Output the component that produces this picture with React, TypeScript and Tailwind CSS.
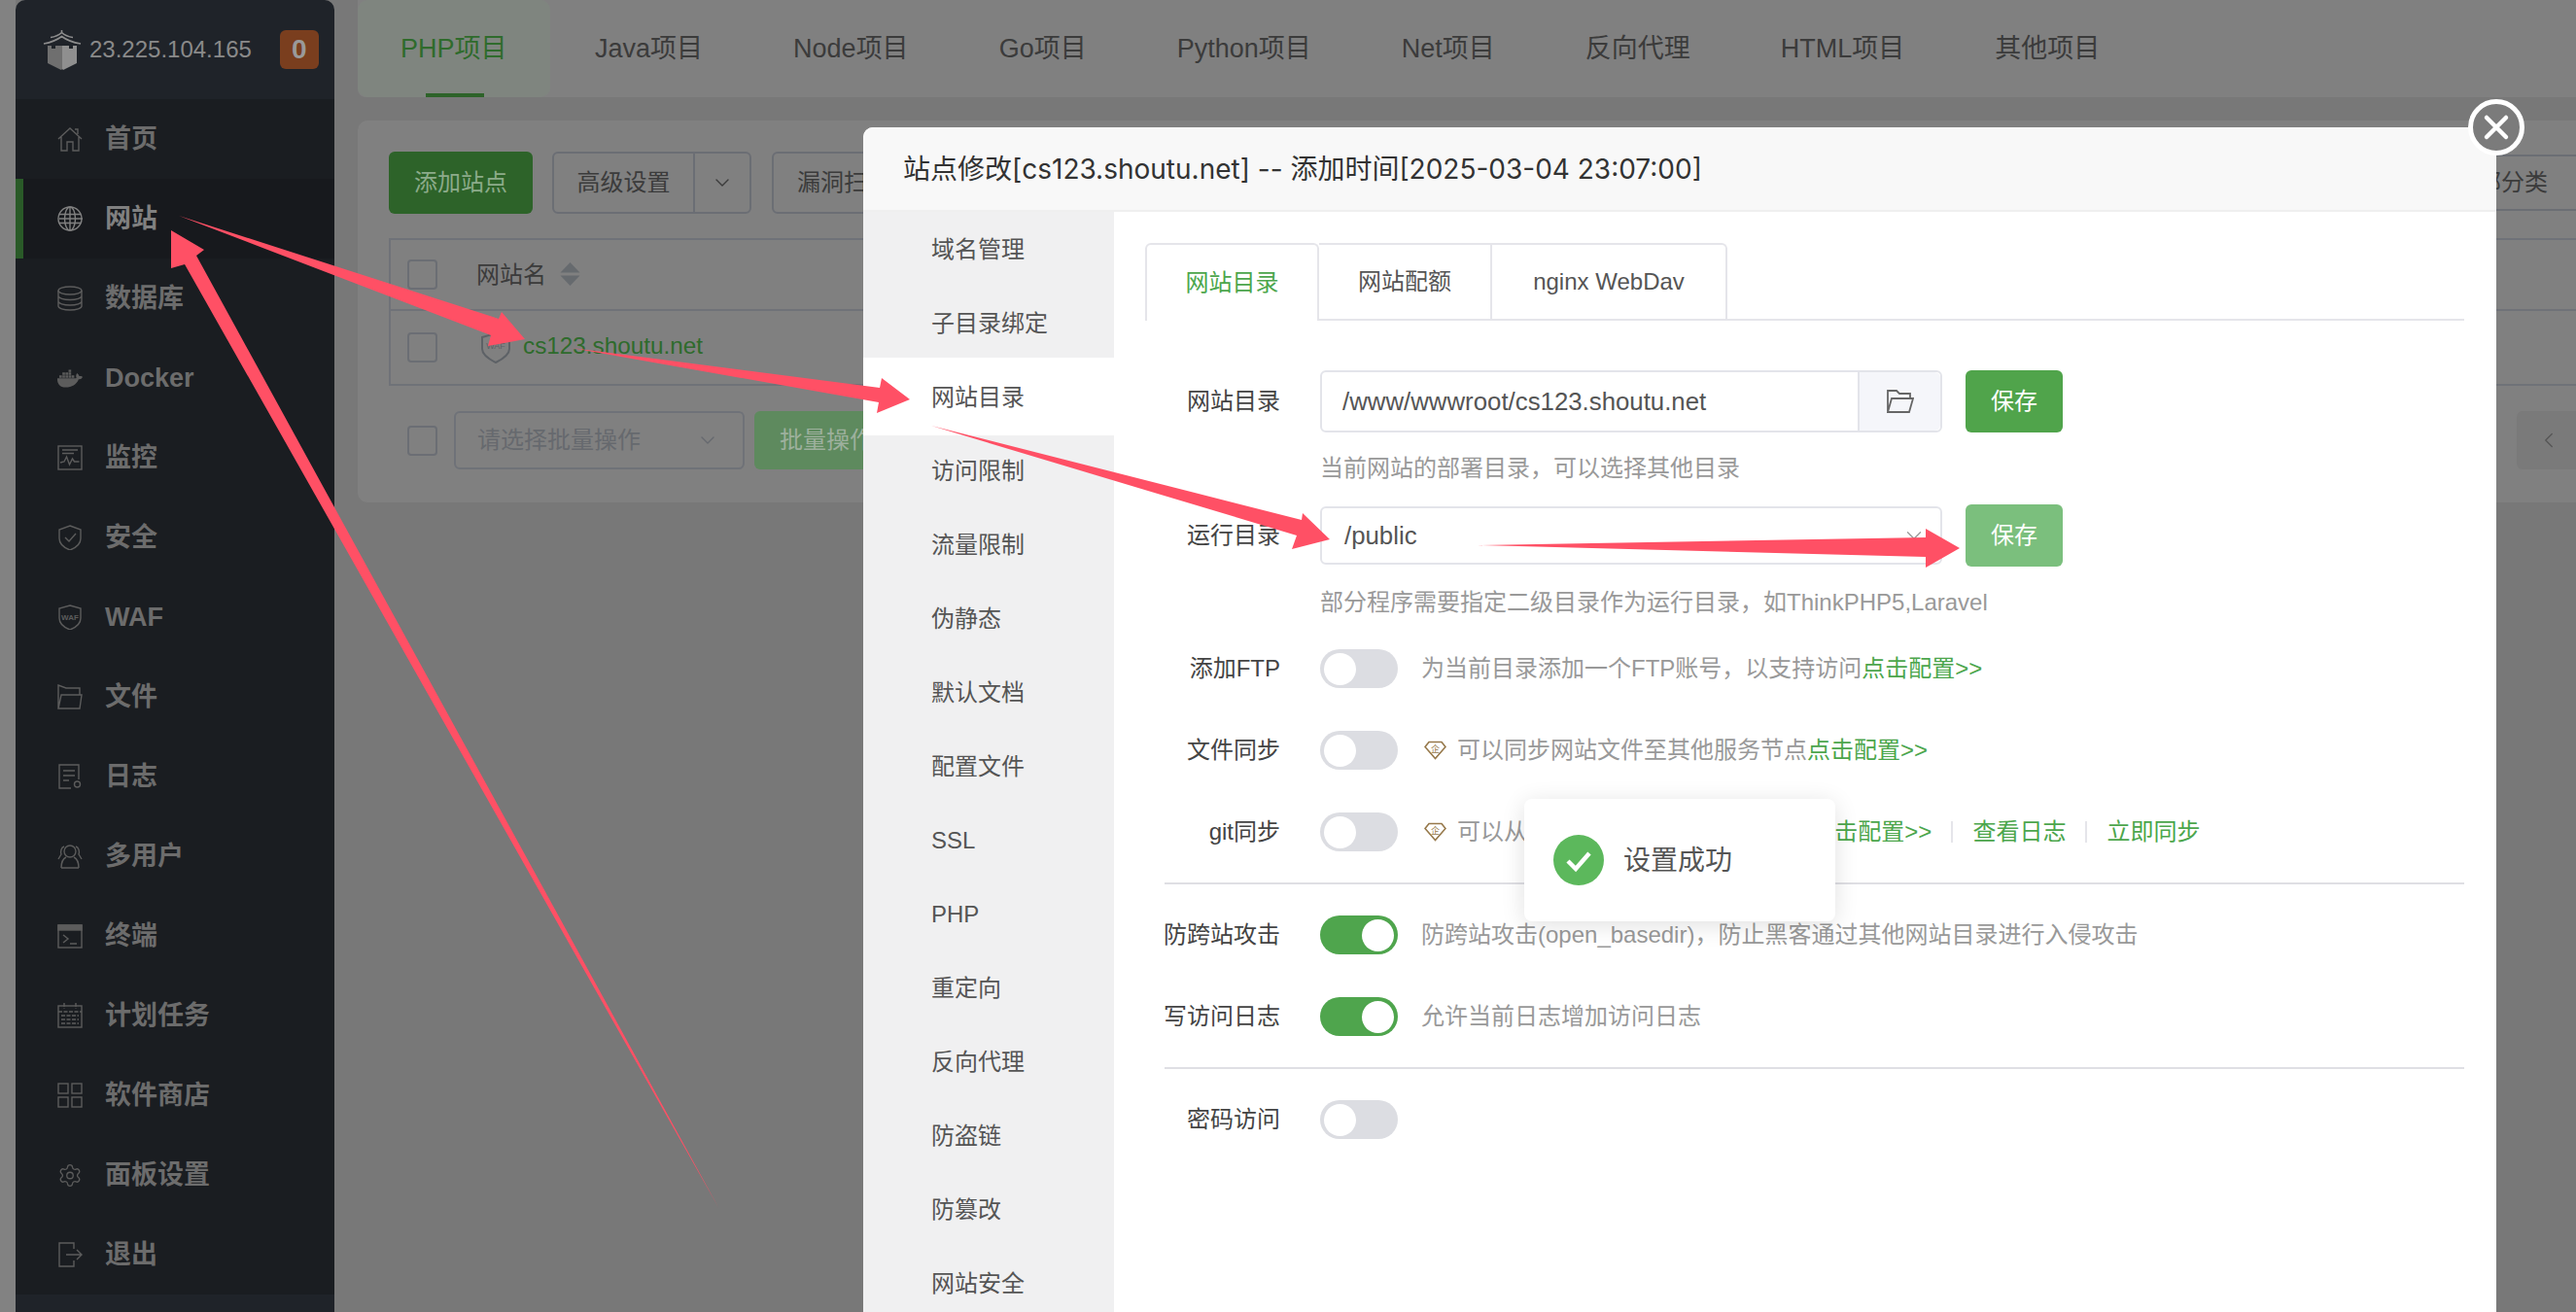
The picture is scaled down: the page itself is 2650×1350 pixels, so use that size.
import { ChevronDown, ChevronLeft, Settings } from "lucide-react";
import { FaDocker } from "react-icons/fa";
import type { ReactNode } from "react";

function Ico({ children }: { children: ReactNode }) {
  return (
    <svg width="26" height="26" viewBox="0 0 26 26" fill="none" stroke="currentColor" strokeWidth="1.4">
      {children}
    </svg>
  );
}

const sideItems: { label: string; icon: ReactNode; active?: boolean }[] = [
  {
    label: "首页",
    icon: (
      <Ico>
        <path d="M1 13 13 2l12 11M18 3h3v5M4 11v14h6v-9h6v9h6V11" />
      </Ico>
    ),
  },
  {
    label: "网站",
    active: true,
    icon: (
      <Ico>
        <circle cx="13" cy="13" r="12" />
        <ellipse cx="13" cy="13" rx="5.5" ry="12" />
        <path d="M2 8.5h22M2 13h24M2 17.5h22M13 1v24" />
      </Ico>
    ),
  },
  {
    label: "数据库",
    icon: (
      <Ico>
        <ellipse cx="13" cy="5" rx="12" ry="4" />
        <path d="M1 5v16c0 2.2 5.4 4 12 4s12-1.800 12-4V5M1 10.500c0 2.200 5.400 4 12 4s12-1.800 12-4M1 16c0 2.200 5.400 4 12 4s12-1.800 12-4" />
      </Ico>
    ),
  },
  { label: "Docker", icon: <FaDocker size={27} /> },
  {
    label: "监控",
    icon: (
      <Ico>
        <rect x="1" y="1" width="24" height="24" />
        <path d="M5 5h16M5 8.500h12M3 18l4-1 2.500-5 3 8 3-6 2 3 5 0" />
      </Ico>
    ),
  },
  {
    label: "安全",
    icon: (
      <Ico>
        <path d="M13 1 24 5v9c0 6-6 10-11 12C8 24 2 20 2 14V5Z" />
        <path d="m8 13 4 4 7-8" />
      </Ico>
    ),
  },
  {
    label: "WAF",
    icon: (
      <Ico>
        <path d="M13 1 24 4v10c0 6-6 10-11 12C8 24 2 20 2 14V4Z" />
        <text x="13" y="16" fontSize="8" textAnchor="middle" fill="currentColor" stroke="none">
          WAF
        </text>
      </Ico>
    ),
  },
  {
    label: "文件",
    icon: (
      <Ico>
        <path d="M1 25V1l8 3h14v7M1 25h22l2-14H4L1 25Z" />
      </Ico>
    ),
  },
  {
    label: "日志",
    icon: (
      <Ico>
        <path d="M14 25H2V1h20v15M6 7h12M6 12h12M6 17h6" />
        <circle cx="20.500" cy="21" r="3" />
      </Ico>
    ),
  },
  {
    label: "多用户",
    icon: (
      <Ico>
        <circle cx="13" cy="8" r="6" />
        <path d="M4 25c0-7 3-10 5-11M22 25c0-7-3-10-5-11M4 25h18M7 3c-3 1-4 5-3 8l-3 5M19 3c3 1 4 5 3 8l3 5" />
      </Ico>
    ),
  },
  {
    label: "终端",
    icon: (
      <Ico>
        <rect x="1" y="2" width="24" height="23" />
        <rect x="1" y="2" width="24" height="5" fill="currentColor" />
        <path d="m6 12 5 4-5 4M13 21h7" />
      </Ico>
    ),
  },
  {
    label: "计划任务",
    icon: (
      <Ico>
        <rect x="1" y="3" width="24" height="22" />
        <path d="M7 0v6M19 0v6M1 9h24M4 13h18M4 17h18M4 21h18" strokeDasharray="4 1.500" />
      </Ico>
    ),
  },
  {
    label: "软件商店",
    icon: (
      <Ico>
        <rect x="1" y="1" width="10" height="10" />
        <rect x="15" y="1" width="10" height="10" />
        <rect x="1" y="15" width="10" height="10" />
        <rect x="15" y="15" width="10" height="10" />
      </Ico>
    ),
  },
  { label: "面板设置", icon: <Settings size={27} strokeWidth={1.2} /> },
  {
    label: "退出",
    icon: (
      <Ico>
        <path d="M17 7V1H2v24h15v-6M9 13h16M20 8l5 5-5 5" />
      </Ico>
    ),
  },
];

const projectTabs = ["PHP项目", "Java项目", "Node项目", "Go项目", "Python项目", "Net项目", "反向代理", "HTML项目", "其他项目"];

const siteMenu = [
  "域名管理",
  "子目录绑定",
  "网站目录",
  "访问限制",
  "流量限制",
  "伪静态",
  "默认文档",
  "配置文件",
  "SSL",
  "PHP",
  "重定向",
  "反向代理",
  "防盗链",
  "防篡改",
  "网站安全",
];

function Toggle({ on }: { on?: boolean }) {
  return (
    <div
      className={`flex h-[40px] w-[80px] shrink-0 items-center rounded-full px-[4px] ${
        on ? "justify-end bg-[#4fa54d]" : "justify-start bg-[#dcdde2]"
      }`}
    >
      <div className="h-[33px] w-[33px] rounded-full bg-white" />
    </div>
  );
}

function Diamond() {
  return (
    <svg width="23" height="20" viewBox="0 0 23 20" fill="none" stroke="#96784a" strokeWidth="1.6" className="mr-[11px] ml-[3px] shrink-0">
      <path d="M5 1.500h13l4 5-10.500 12L1 6.500Z" />
      <text x="11.500" y="11.500" fontSize="9" textAnchor="middle" fill="#96784a" stroke="none">
        企
      </text>
    </svg>
  );
}

function Row({ label, on, children }: { label: string; on?: boolean; children?: ReactNode }) {
  return (
    <div className="flex h-[84px] items-center">
      <div className="w-[139px] shrink-0 text-right text-[24px] text-[#444]">{label}</div>
      <div className="ml-[41px]">
        <Toggle on={on} />
      </div>
      <div className="ml-[24px] flex items-center text-[24px] whitespace-nowrap text-[#999]">{children}</div>
    </div>
  );
}

function Checkbox() {
  return <div className="h-[31px] w-[31px] rounded-[4px] border-2 border-[#6b6e74]" />;
}

export default function App() {
  return (
    <div className="relative flex h-[1350px] w-[2650px] overflow-hidden bg-[#787878] [font-family:'Liberation_Sans','Noto_Sans_CJK_SC',sans-serif]">
      <div className="w-[16px] shrink-0 bg-[#828282]" />

      {/* 左侧菜单 */}
      <aside className="flex h-full w-[328px] shrink-0 flex-col overflow-hidden rounded-t-[10px] bg-[#1f2329]">
        <div className="flex h-[102px] shrink-0 items-center pl-[28px]">
          <svg width="40" height="41" viewBox="0 0 40 41" className="shrink-0">
            <g fill="none" stroke="#8d8d8d" strokeWidth="1.600">
              <path d="M19.500 0v3M8 7.500Q15 6.500 19.500 2.500 24 6.500 31 7.500M1 14q11-2 18.500-7.500Q27 12 39 14" />
            </g>
            <path d="M5 16h4v3h4v-3h7v24l-1 1-14-7Z" fill="#6f6f6f" />
            <path d="M20 16h7v3h4v-3h4v18l-14 7-1-1Z" fill="#8f8f8f" />
          </svg>
          <span className="ml-[8px] text-[24px] text-[#8a8a8a]">23.225.104.165</span>
          <span className="ml-[29px] flex h-[40px] w-[40px] items-center justify-center rounded-[6px] bg-[#7a3e1e] text-[28px] font-bold text-[#9a9a9a]">
            0
          </span>
        </div>
        <nav className="flex-1 bg-[#1a1d21]">
          {sideItems.map((item) => (
            <div
              key={item.label}
              className={`flex h-[82px] items-center text-[27px] font-bold ${
                item.active
                  ? "border-l-[8px] border-[#2a5a28] bg-[#17191d] pl-[35px] text-[#808080]"
                  : "pl-[43px] text-[#6c6c6c]"
              }`}
            >
              <span className={`flex w-[26px] justify-center ${item.active ? "text-[#808080]" : "text-[#5c5c5c]"}`}>{item.icon}</span>
              <span className="ml-[23px]">{item.label}</span>
            </div>
          ))}
        </nav>
        <div className="h-[18px] shrink-0 bg-[#1f2329]" />
      </aside>

      {/* 主内容 */}
      <main className="ml-[24px] w-[2340px] shrink-0">
        <div className="flex h-[100px] items-center rounded-b-[8px] bg-[#808080] text-[27px] text-[#3b3b3b]">
          {projectTabs.map((t, i) => (
            <div
              key={t}
              className={`relative flex h-full items-center whitespace-nowrap ${
                i === 0 ? "rounded-[10px] bg-[#7f857f] px-[44px] text-[#2f6b2c]" : "px-[46.500px]"
              }`}
            >
              {t}
              {i === 0 && <div className="absolute bottom-0 left-[70px] h-[4px] w-[60px] bg-[#2d6329]" />}
            </div>
          ))}
        </div>

        <div className="mt-[24px] h-[393px] rounded-[10px] bg-[#808080] px-[32px] pt-[32px] text-[24px] text-[#3b3b3b]">
          <div className="flex h-[64px] items-center">
            <div className="flex h-full w-[148px] items-center justify-center rounded-[6px] bg-[#2d6329] text-[#8cab8a]">添加站点</div>
            <div className="ml-[20px] flex h-full w-[205px] items-center rounded-[6px] border-2 border-[#6b6e74]">
              <span className="flex-1 text-center">高级设置</span>
              <span className="flex h-full w-[58px] items-center justify-center border-l-2 border-[#6b6e74]">
                <ChevronDown size={24} strokeWidth={1.4} />
              </span>
            </div>
            <div className="ml-[21px] flex h-full w-[240px] items-center rounded-[6px] border-2 border-[#6b6e74] pl-[24px]">漏洞扫描</div>
            <div className="ml-auto flex h-[58px] w-[300px] items-center justify-end border-y-2 border-[#6b6e74] pr-[55px]">全部分类</div>
          </div>

          <div className="mt-[25px] h-[152px] border-2 border-[#6f7278]">
            <div className="flex h-[73px] items-center border-b-2 border-[#6f7278] pl-[17px]">
              <Checkbox />
              <span className="ml-[40px]">网站名</span>
              <svg width="21" height="24" viewBox="0 0 20 24" className="mb-[2px] ml-[14px]" fill="#666a6e">
                <path d="M10 0 20 10.500H0ZM0 13.500h20L10 24Z" />
              </svg>
            </div>
            <div className="flex h-[75px] items-center pl-[17px]">
              <Checkbox />
              <svg width="30" height="32" viewBox="0 0 30 32" fill="none" stroke="#5d6166" strokeWidth="2" className="ml-[45px]">
                <path d="M15 1 29 5v12c0 6-8 11-14 14C9 28 1 23 1 17V5Z" />
                <text x="15" y="17" fontSize="9" textAnchor="middle" fill="#5d6166" stroke="none">
                  WAF
                </text>
              </svg>
              <span className="mb-[3px] ml-[13px] text-[24.300px] text-[#2e6b2c]">cs123.shoutu.net</span>
            </div>
          </div>

          <div className="mt-[26px] flex h-[60px] items-center pl-[19px]">
            <Checkbox />
            <div className="ml-[17px] flex h-full w-[299px] items-center rounded-[6px] border-2 border-[#6f7278] pl-[22px] text-[#66696e]">
              <span className="flex-1">请选择批量操作</span>
              <ChevronDown size={24} strokeWidth={1.4} className="mr-[24px]" />
            </div>
            <div className="ml-[10px] flex h-full w-[130px] items-center rounded-[6px] bg-[#5e8a5e] pl-[26px] text-[#9db09d]">批量操作</div>
            <div className="ml-auto flex h-full w-[87px] items-center rounded-[6px] bg-[#7a7a7a] pl-[20px] text-[#555]">
              <ChevronLeft size={26} strokeWidth={1.2} />
            </div>
          </div>
        </div>
      </main>

      {/* 站点修改弹窗 */}
      <section className="absolute top-[131px] left-[888px] flex h-[1300px] w-[1680px] flex-col rounded-t-[10px] bg-white">
        <header className="flex h-[87px] shrink-0 items-center rounded-t-[10px] border-b-2 border-[#efefef] bg-[#f8f8f8] pl-[41px] text-[28px] text-[#333] [font-family:Inter,'Noto_Sans_CJK_SC',sans-serif]">
          站点修改[cs123.shoutu.net] -- 添加时间[2025-03-04 23:07:00]
        </header>
        <div className="flex flex-1">
          <ul className="w-[258px] shrink-0 bg-[#f0f0f1] text-[24px] text-[#555]">
            {siteMenu.map((m, i) => (
              <li key={m} className={`flex items-center pt-[1px] pl-[70px] ${i === 2 ? "-my-[2px] h-[80px] bg-white" : "h-[76px]"}`}>
                {m}
              </li>
            ))}
          </ul>

          <div className="flex-1 pt-[32px] pr-[33px] pl-[32px] text-[24px]">
            <div className="flex h-[80px] border-b-2 border-[#e5e5ea]">
              <div className="-mb-[2px] flex w-[179px] items-center justify-center rounded-t-[6px] border-x-2 border-t-2 border-[#e5e5ea] bg-white text-[#4ca64c]">网站目录</div>
              <div className="flex w-[178px] items-center justify-center border-t-2 border-r-2 border-[#e5e5ea] text-[#555]">网站配额</div>
              <div className="flex w-[242px] items-center justify-center rounded-tr-[6px] border-t-2 border-r-2 border-[#e5e5ea] text-[#555]">nginx WebDav</div>
            </div>

            <div className="mt-[51px] flex h-[64px] items-center">
              <div className="w-[139px] shrink-0 text-right text-[#444]">网站目录</div>
              <div className="ml-[41px] flex h-full w-[640px] items-center rounded-[6px] border-2 border-[#e3e4ea]">
                <span className="flex-1 pl-[21px] text-[25.800px] text-[#555]">/www/wwwroot/cs123.shoutu.net</span>
                <span className="flex h-full w-[85px] items-center justify-center rounded-r-[6px] border-l-2 border-[#e3e4ea] bg-[#f5f6fa]">
                  <svg width="28" height="24" viewBox="0 0 28 24" fill="none" stroke="#666" strokeWidth="1.800">
                    <path d="M1 23V1h9l3 3h11v5M1 23h22l4-14H5L1 23Z" />
                  </svg>
                </span>
              </div>
              <div className="ml-[24px] flex h-full w-[100px] items-center justify-center rounded-[6px] bg-[#50a44b] text-white">保存</div>
            </div>
            <div className="flex h-[74px] items-center pl-[180px] text-[#999]">当前网站的部署目录，可以选择其他目录</div>

            <div className="flex h-[64px] items-center">
              <div className="w-[139px] shrink-0 text-right text-[#444]">运行目录</div>
              <div className="ml-[41px] flex h-[60px] w-[640px] items-center rounded-[6px] border-2 border-[#e3e4ea] pr-[14px]">
                <span className="flex-1 pl-[23px] text-[25.800px] text-[#555]">/public</span>
                <ChevronDown size={26} strokeWidth={1.2} className="text-[#999]" />
              </div>
              <div className="ml-[24px] flex h-full w-[100px] items-center justify-center rounded-[6px] bg-[#7bbf7d] text-white">保存</div>
            </div>
            <div className="h-[63px] pt-[17px] pl-[180px] leading-[40px] text-[#999]">部分程序需要指定二级目录作为运行目录，如ThinkPHP5,Laravel</div>

            <Row label="添加FTP">
              为当前目录添加一个FTP账号，以支持访问<span className="text-[#4ca64c]">点击配置&gt;&gt;</span>
            </Row>
            <Row label="文件同步">
              <Diamond />
              可以同步网站文件至其他服务节点<span className="text-[#4ca64c]">点击配置&gt;&gt;</span>
            </Row>
            <Row label="git同步">
              <Diamond />
              可以从git仓库同步网站文件至本地<span className="ml-[3px] text-[#4ca64c]">点击配置&gt;&gt;</span>
              <span className="mx-[20px] h-[22px] border-l-2 border-[#e5e5ea]" />
              <span className="text-[#4ca64c]">查看日志</span>
              <span className="mx-[20px] h-[22px] border-l-2 border-[#e5e5ea]" />
              <span className="text-[#4ca64c]">立即同步</span>
            </Row>
            <div className="mt-[10px] ml-[20px] h-[2px] bg-[#dfdfe4]" />
            <div className="mt-[10px]">
              <Row label="防跨站攻击" on>
                防跨站攻击(open_basedir)，防止黑客通过其他网站目录进行入侵攻击
              </Row>
              <Row label="写访问日志" on>
                允许当前日志增加访问日志
              </Row>
            </div>
            <div className="mt-[10px] ml-[20px] h-[2px] bg-[#dfdfe4]" />
            <div className="mt-[10px]">
              <Row label="密码访问" />
            </div>
          </div>
        </div>
      </section>

      {/* 关闭按钮 */}
      <div className="absolute top-[102px] left-[2539px] flex h-[58px] w-[58px] items-center justify-center rounded-full border-[5px] border-white bg-[#7b7b7b]">
        <svg width="28" height="28" viewBox="0 0 28 28" stroke="white" strokeWidth="4.500" strokeLinecap="round">
          <path d="M4 4l20 20M24 4 4 24" />
        </svg>
      </div>

      {/* 提示框 */}
      <div className="absolute top-[822px] left-[1568px] flex h-[126px] w-[320px] items-center rounded-[8px] bg-white pl-[30px] text-[28px] text-[#555] shadow-[0_4px_24px_rgba(0,0,0,0.12)]">
        <svg width="52" height="52" viewBox="0 0 52 52" className="shrink-0">
          <circle cx="26" cy="26" r="26" fill="#5cb85c" />
          <path d="M15 27l8 8 14-16" fill="none" stroke="white" strokeWidth="4.500" />
        </svg>
        <span className="ml-[20px] pt-[2px]">设置成功</span>
      </div>

      {/* 标注箭头 */}
      <svg className="pointer-events-none absolute top-0 left-0" width="2650" height="1350" fill="#ff5065">
        <polygon points="184,222 513,328 516,321 540,349 502,356 505,345" />
        <polygon points="588,358 905,399 907,389 936,411 902,425 904,414" />
        <polygon points="958,438 1339,535 1340,528 1368,555 1329,565 1334,551" />
        <polygon points="1520,561 1981,553 1981,544 2016,564 1981,584 1981,573" />
        <polygon points="176,237 210,257 202,263 740,1244 190,272 176,276" />
      </svg>
    </div>
  );
}
